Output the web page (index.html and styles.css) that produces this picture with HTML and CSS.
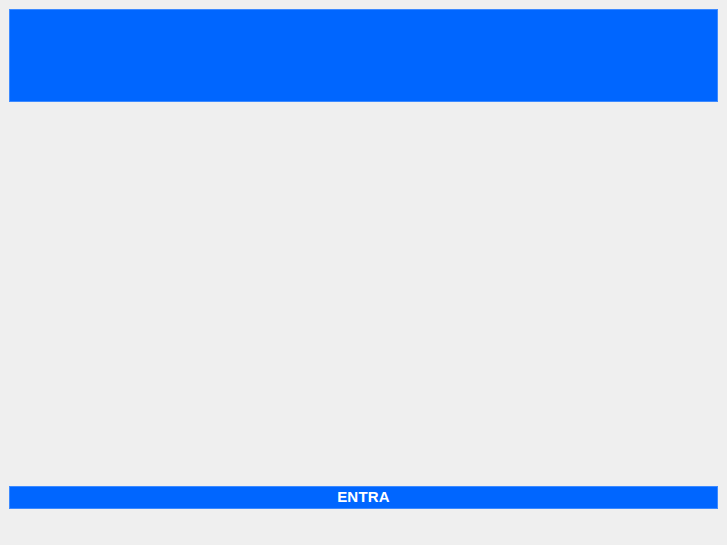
FILE: index.html
```html
<!DOCTYPE html>
<html>
<head>
<meta charset="utf-8">
<link rel="stylesheet" href="styles.css">
</head>
<body>
<div class="page">
  <header class="header"></header>
  <main class="content"></main>
  <button class="enter">ENTRA</button>
</div>
</body>
</html>
```
FILE: styles.css
```css
html, body { margin: 0; padding: 0; }
body {
  background: #efefef;
  font-family: "Liberation Sans", Arial, sans-serif;
}
.page {
  display: flex;
  flex-direction: column;
  padding: 9px 9px 0 9px;
  height: 545px;
  box-sizing: border-box;
}
.header {
  height: 93px;
  background: #0066ff;
  box-shadow: inset 0 0 0 1px #3d8aff;
}
.content {
  height: 384px;
}
.enter {
  display: block;
  width: 100%;
  height: 23px;
  margin: 0;
  padding: 0 0 3px 0;
  border: none;
  background: #0066ff;
  box-shadow: inset 0 0 0 1px #3d8aff;
  color: #ffffff;
  font-family: "Liberation Sans", Arial, sans-serif;
  font-weight: bold;
  font-size: 15px;
  letter-spacing: 0.2px;
}
```
